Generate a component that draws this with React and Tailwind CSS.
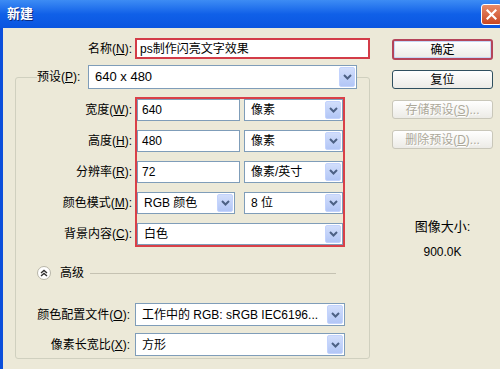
const font = { fontFamily: '"Liberation Sans", "Noto Sans CJK SC", sans-serif' };

const Key = ({ children }) => <span className="underline">{children}</span>;

const Chevron = () => (
  <svg width="9" height="6" viewBox="0 0 9 6">
    <path d="M1 1 L4.5 4.5 L8 1" fill="none" stroke="#4d6185" strokeWidth="2" />
  </svg>
);

const Select = ({ value, w, h = "h-[22px]" }) => (
  <div className={`${w} ${h} flex items-stretch border border-[#7f9db9] bg-white`}>
    <div className="flex-1 flex items-center pl-[6px] text-[12px] text-black whitespace-nowrap overflow-hidden">
      {value}
    </div>
    <div className="w-[16px] m-[1px] flex items-center justify-center rounded-[2px] border border-[#c3d3fd] bg-gradient-to-b from-[#d2defb] to-[#b2c6f6]">
      <Chevron />
    </div>
  </div>
);

const Field = ({ value, w }) => (
  <div className={`${w} h-[22px] flex items-center border border-[#7f9db9] bg-white pl-[4px] text-[12px]`}>
    {value}
  </div>
);

const Label = ({ children }) => (
  <div className="h-[22px] flex items-center justify-end text-[12px] text-black whitespace-nowrap">{children}</div>
);

const Button = ({ children, disabled, primary, className = "" }) => (
  <div
    className={`w-[101px] flex items-center justify-center rounded-[3px] text-[12px] bg-gradient-to-b from-[#ffffff] to-[#ecebe6] ${className} ${
      disabled
        ? "border border-[#c9c7ba] text-[#aca899] [text-shadow:1px_1px_0_#fff]"
        : primary
        ? "border-2 border-[#b4445a] text-black shadow-[inset_0_0_0_1px_#c6d6f6]"
        : "border border-[#2f4f5f] text-black"
    }`}
  >
    {children}
  </div>
);

export default function App() {
  return (
    <div className="w-[500px] h-[369px] overflow-hidden flex flex-col bg-[#ece9d8]" style={font}>
      {/* title bar */}
      <div className="h-[28px] shrink-0 flex items-center justify-between bg-gradient-to-b from-[#3d8cf4] via-[#1060e8] to-[#0a55e0]">
        <span className="pl-[7px] text-[13px] font-bold text-white [text-shadow:1px_1px_0_#0a2a80]">新建</span>
        <div className="w-[21px] h-[21px] mr-[-2px] flex items-center justify-center rounded-[3px] border border-white bg-gradient-to-b from-[#e88a68] to-[#c9461f]">
          <svg width="11" height="11" viewBox="0 0 11 11">
            <path d="M1.5 1.5 L9.5 9.5 M9.5 1.5 L1.5 9.5" stroke="white" strokeWidth="2.2" strokeLinecap="square" />
          </svg>
        </div>
      </div>

      {/* body */}
      <div className="flex-1 flex border-l-[3px] border-[#0b4fdb]">
        {/* left column */}
        <div className="w-[367px] flex flex-col">
          <div className="flex items-center pt-[10px]">
            <div className="w-[129px] text-right text-[12px]">
              名称(<Key>N</Key>):
            </div>
            <div className="ml-[3px] w-[235px] h-[21px] flex items-center border-2 border-[#d33c48] bg-white pl-[3px] text-[12px]">
              ps制作闪亮文字效果
            </div>
          </div>

          <fieldset className="mt-[6px] ml-[12px] w-[355px] border border-[#d0d0bf] rounded-[3px]">
            <legend className="ml-[21px] flex items-center">
              <span className="w-[51px] text-[12px]">
                预设(<Key>P</Key>):
              </span>
              <Select value={<span className="text-[13px]">640 x 480</span>} w="w-[269px]" h="h-[24px]" />
            </legend>

            <div className="flex mt-[8px]">
              <div className="w-[116px] flex flex-col gap-[9px] pt-[2px]">
                <Label>宽度(<Key>W</Key>):</Label>
                <Label>高度(<Key>H</Key>):</Label>
                <Label>分辨率(<Key>R</Key>):</Label>
                <Label>颜色模式(<Key>M</Key>):</Label>
                <Label>背景内容(<Key>C</Key>):</Label>
              </div>
              <div className="ml-[3px] w-[210px] border-2 border-[#d94048] flex flex-col gap-[9px]">
                <div className="flex gap-[4px]">
                  <Field value="640" w="w-[103px]" />
                  <Select value="像素" w="w-[99px]" />
                </div>
                <div className="flex gap-[4px]">
                  <Field value="480" w="w-[103px]" />
                  <Select value="像素" w="w-[99px]" />
                </div>
                <div className="flex gap-[4px]">
                  <Field value="72" w="w-[103px]" />
                  <Select value="像素/英寸" w="w-[99px]" />
                </div>
                <div className="flex gap-[9px]">
                  <Select value="RGB 颜色" w="w-[98px]" />
                  <Select value="8 位" w="w-[99px]" />
                </div>
                <Select value="白色" w="w-[206px]" />
              </div>
            </div>

            <div className="mt-[18px] h-[16px] flex items-center pl-[21px] pr-[33px]">
              <div className="w-[14px] h-[14px] rounded-full border border-[#b8b6a8] bg-white flex items-center justify-center">
                <svg width="8" height="8" viewBox="0 0 8 8">
                  <path d="M1 4 L4 1.5 L7 4 M1 7 L4 4.5 L7 7" fill="none" stroke="#333" strokeWidth="1.4" />
                </svg>
              </div>
              <span className="ml-[9px] text-[12px]">高级</span>
              <div className="ml-[6px] flex-1 h-px bg-[#c5c2b2]" />
            </div>

            <div className="flex mt-[22px] pb-[2px]">
              <div className="w-[114px] flex flex-col gap-[7px]">
                <div className="h-[23px] flex items-center justify-end text-[12px] whitespace-nowrap">
                  颜色配置文件(<Key>O</Key>):
                </div>
                <div className="h-[23px] flex items-center justify-end text-[12px] whitespace-nowrap">
                  像素长宽比(<Key>X</Key>):
                </div>
              </div>
              <div className="ml-[5px] flex flex-col gap-[7px]">
                <Select value="工作中的 RGB: sRGB IEC6196..." w="w-[210px]" h="h-[23px]" />
                <Select value="方形" w="w-[210px]" h="h-[23px]" />
              </div>
            </div>
          </fieldset>
        </div>

        {/* right column */}
        <div className="ml-[22px] w-[101px] flex flex-col items-center pt-[11px]">
          <Button primary className="h-[21px]">确定</Button>
          <Button className="h-[19px] mt-[10px]">复位</Button>
          <Button disabled className="h-[19px] mt-[11px]">
            存储预设(<Key>S</Key>)...
          </Button>
          <Button disabled className="h-[19px] mt-[11px]">
            删除预设(<Key>D</Key>)...
          </Button>
          <div className="mt-[70px] text-[13px] leading-[15px]">图像大小:</div>
          <div className="mt-[11px] text-[12px] leading-[15px]">900.0K</div>
        </div>
      </div>
    </div>
  );
}
